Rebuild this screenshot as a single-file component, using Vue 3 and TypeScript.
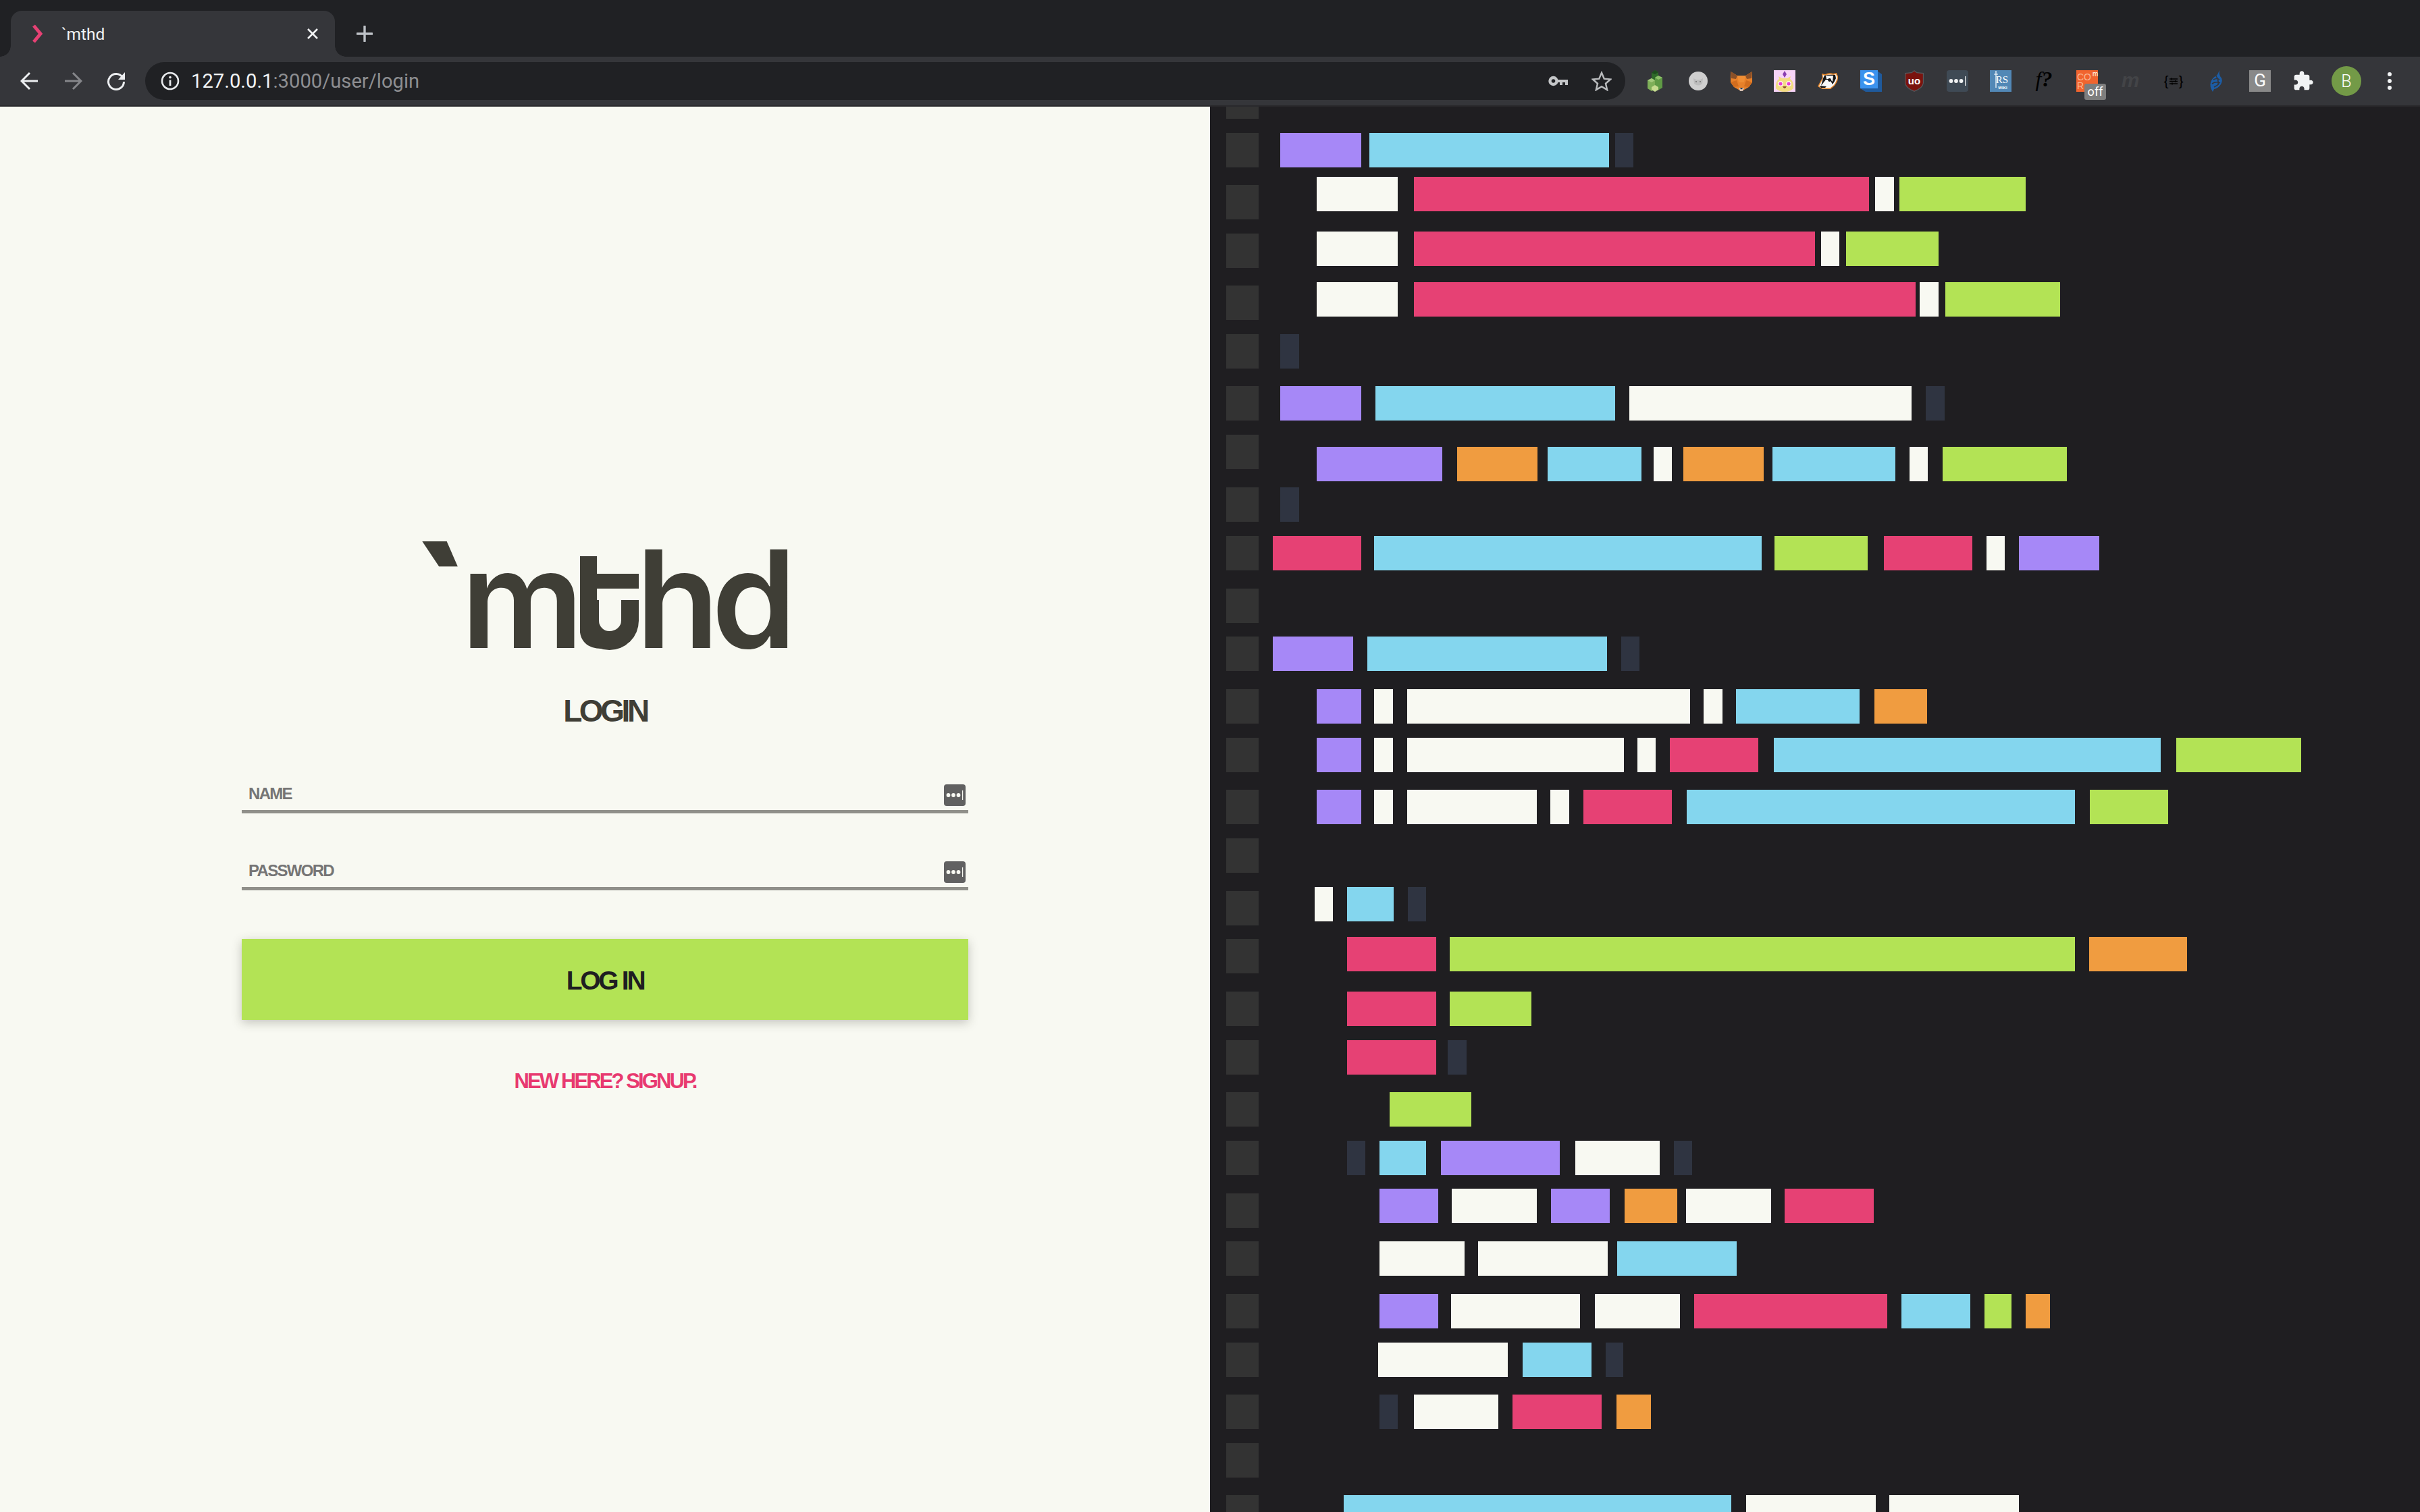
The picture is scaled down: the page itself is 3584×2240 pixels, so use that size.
<script setup lang="ts">
type Tone = 'pink' | 'cyan' | 'purple' | 'green' | 'orange' | 'white' | 'dark'
type Bar = [Tone, number, number]
interface SourceRow { g: number; b?: number; bars?: Bar[]; h?: number }

const BAR_ORIGIN = 1864

const source: SourceRow[] = [
  { g: 158, h: 18 },
  { g: 197, bars: [['purple', 1896, 2016], ['cyan', 2028, 2383], ['dark', 2392, 2419]] },
  { g: 274, b: 262, bars: [['white', 1950, 2070], ['pink', 2094, 2768], ['white', 2777, 2805], ['green', 2813, 3000]] },
  { g: 346, b: 343, bars: [['white', 1950, 2070], ['pink', 2094, 2688], ['white', 2697, 2724], ['green', 2734, 2871]] },
  { g: 423, b: 418, bars: [['white', 1950, 2070], ['pink', 2094, 2837], ['white', 2843, 2871], ['green', 2881, 3051]] },
  { g: 495, bars: [['dark', 1896, 1924]] },
  { g: 572, bars: [['purple', 1896, 2016], ['cyan', 2037, 2392], ['white', 2413, 2831], ['dark', 2852, 2880]] },
  { g: 644, b: 662, bars: [['purple', 1950, 2136], ['orange', 2158, 2277], ['cyan', 2292, 2431], ['white', 2449, 2476], ['orange', 2493, 2612], ['cyan', 2625, 2807], ['white', 2828, 2855], ['green', 2877, 3061]] },
  { g: 722, bars: [['dark', 1896, 1924]] },
  { g: 794, bars: [['pink', 1885, 2016], ['cyan', 2035, 2609], ['green', 2628, 2766], ['pink', 2790, 2921], ['white', 2942, 2969], ['purple', 2990, 3109]] },
  { g: 872 },
  { g: 943, bars: [['purple', 1885, 2004], ['cyan', 2025, 2380], ['dark', 2401, 2428]] },
  { g: 1021, bars: [['purple', 1950, 2016], ['white', 2035, 2063], ['white', 2084, 2503], ['white', 2523, 2551], ['cyan', 2571, 2754], ['orange', 2776, 2854]] },
  { g: 1093, bars: [['purple', 1950, 2016], ['white', 2035, 2063], ['white', 2084, 2405], ['white', 2425, 2452], ['pink', 2473, 2604], ['cyan', 2627, 3200], ['green', 3223, 3408]] },
  { g: 1170, bars: [['purple', 1950, 2016], ['white', 2035, 2063], ['white', 2084, 2276], ['white', 2296, 2324], ['pink', 2345, 2476], ['cyan', 2498, 3073], ['green', 3095, 3211]] },
  { g: 1242 },
  { g: 1320, b: 1314, bars: [['white', 1947, 1974], ['cyan', 1995, 2064], ['dark', 2085, 2112]] },
  { g: 1391, b: 1388, bars: [['pink', 1995, 2127], ['green', 2147, 3073], ['orange', 3094, 3239]] },
  { g: 1469, bars: [['pink', 1995, 2127], ['green', 2147, 2268]] },
  { g: 1541, bars: [['pink', 1995, 2127], ['dark', 2144, 2172]] },
  { g: 1618, bars: [['green', 2058, 2179]] },
  { g: 1690, bars: [['dark', 1995, 2022], ['cyan', 2043, 2112], ['purple', 2134, 2310], ['white', 2333, 2458], ['dark', 2479, 2506]] },
  { g: 1768, b: 1761, bars: [['purple', 2043, 2130], ['white', 2150, 2276], ['purple', 2297, 2384], ['orange', 2406, 2484], ['white', 2497, 2623], ['pink', 2643, 2775]] },
  { g: 1839, bars: [['white', 2043, 2169], ['white', 2189, 2381], ['cyan', 2395, 2572]] },
  { g: 1917, bars: [['purple', 2043, 2130], ['white', 2149, 2340], ['white', 2362, 2488], ['pink', 2509, 2795], ['cyan', 2816, 2918], ['green', 2939, 2979], ['orange', 3000, 3036]] },
  { g: 1989, bars: [['white', 2041, 2233], ['cyan', 2255, 2357], ['dark', 2378, 2404]] },
  { g: 2066, bars: [['dark', 2043, 2070], ['white', 2094, 2219], ['pink', 2240, 2372], ['orange', 2394, 2445]] },
  { g: 2138 },
  { g: 2215, bars: [['cyan', 1990, 2564], ['white', 2586, 2778], ['white', 2798, 2990]] },
]

const tops = source.map((r) => Math.min(r.g, r.b ?? r.g))
const rows = source.map((r, i) => {
  const top = tops[i]
  const next = i + 1 < tops.length ? tops[i + 1] : 2291
  let cursor = BAR_ORIGIN
  const bars = (r.bars ?? []).map(([tone, x0, x1]) => {
    const bar = { tone, width: x1 - x0, gap: x0 - cursor }
    cursor = x1
    return bar
  })
  return {
    height: next - top,
    gutterTop: r.g - top,
    gutterHeight: r.h ?? 51,
    barTop: (r.b ?? r.g) - top,
    bars,
  }
})
</script>

<template>
  <div class="window">
    <header class="tabstrip">
      <div class="tab">
        <svg class="favicon" viewBox="0 0 18 28"><path d="M3 2 L13 14 L3 26" fill="none" stroke="#e64174" stroke-width="5" /></svg>
        <span class="tab-title">`mthd</span>
        <svg class="tab-close" viewBox="0 0 20 20"><path d="M3 3 L17 17 M17 3 L3 17" stroke="#f1f3f4" stroke-width="2.6" /></svg>
      </div>
      <svg class="new-tab" viewBox="0 0 24 24"><path d="M12 1 V23 M1 12 H23" stroke="#bdc1c6" stroke-width="3.4" stroke-linecap="round" /></svg>
    </header>

    <nav class="toolbar">
      <div class="nav-buttons">
        <svg class="nav-icon" viewBox="0 0 28 28"><path d="M26 14 H3 M14 2 L2 14 L14 26" fill="none" stroke="#eceef0" stroke-width="3" /></svg>
        <svg class="nav-icon" viewBox="0 0 28 28"><path d="M2 14 H25 M14 2 L26 14 L14 26" fill="none" stroke="#85868a" stroke-width="3" /></svg>
        <svg class="nav-icon" viewBox="0 0 28 28">
          <path d="M23.5 8.5 A11.5 11.5 0 1 0 25.5 15" fill="none" stroke="#eceef0" stroke-width="3" />
          <path d="M17 12 H27 V1 Z" fill="#eceef0" />
        </svg>
      </div>

      <div class="omnibox">
        <svg class="info" viewBox="0 0 28 28">
          <circle cx="14" cy="14" r="12" fill="none" stroke="#e8eaed" stroke-width="2.6" />
          <path d="M14 12.5 V21" stroke="#e8eaed" stroke-width="2.8" />
          <circle cx="14" cy="8.6" r="1.8" fill="#e8eaed" />
        </svg>
        <span class="url"><span class="url-host">127.0.0.1</span>:3000/user/login</span>
        <span class="omni-spacer"></span>
        <svg class="key" viewBox="0 0 30 16">
          <circle cx="7.5" cy="8" r="5" fill="none" stroke="#c4c6c8" stroke-width="4.4" />
          <path d="M12 6 H29 V14 H25 V10 H21 V14 H17 V10 H12 Z" fill="#c4c6c8" />
        </svg>
        <svg class="star" viewBox="0 0 32 32"><path d="M16 3 L20 12.4 L30 13.3 L22.4 20 L24.7 30 L16 24.8 L7.3 30 L9.6 20 L2 13.3 L12 12.4 Z" fill="none" stroke="#b9bbbd" stroke-width="2.6" /></svg>
      </div>

      <div class="extensions">
        <svg class="ext" viewBox="0 0 32 32">
          <path d="M11 4 L16 0 L21 3 V18 L11 20 Z" fill="#2f6a2a" /><path d="M16 0 L21 3 L16 6 L11 4 Z" fill="#1d4c1e" />
          <path d="M16 11 L21 8 L27 11 V26 L20 30 L16 26 Z" fill="#5f9a45" /><path d="M21 8 L27 11 L21 14 L16 11 Z" fill="#8cc06a" />
          <path d="M5 15 L11 12 L16 15 V28 L11 31 L5 27 Z" fill="#7eaf58" /><path d="M11 12 L16 15 L11 18 L5 15 Z" fill="#a3ca7c" />
          <path d="M11 25 L16 22 L21 25 V29 L16 32 L11 29 Z" fill="#c7dc90" />
        </svg>
        <svg class="ext" viewBox="0 0 32 32">
          <circle cx="16" cy="16" r="14" fill="#cfcfcf" />
          <path d="M9 12 L10 20 Q16 25 22 20 L23 12 L19 14 H13 Z" fill="#bdbdbd" />
          <circle cx="13" cy="17" r=".9" fill="#666" /><circle cx="19" cy="17" r=".9" fill="#666" />
        </svg>
        <svg class="ext" viewBox="0 0 32 32">
          <path d="M0 2 L10 8 H22 L32 2 L32 18 L27 25 L20 29 L16 31 L12 29 L5 25 L0 18 Z" fill="#e8812a" />
          <path d="M0 2 L10 8 L8 13 L1 12 Z" fill="#8a5028" /><path d="M32 2 L22 8 L24 13 L31 12 Z" fill="#8a5028" />
          <path d="M10 8 H22 L20 18 H12 Z" fill="#f08e34" /><path d="M0 18 L9 15 L12 24 L5 25 Z" fill="#d26d1e" /><path d="M32 18 L23 15 L20 24 L27 25 Z" fill="#d26d1e" />
          <path d="M12 26 H20 L18 31 H14 Z" fill="#d7c1b3" /><path d="M13.5 26 H18.5 L16 28.5 Z" fill="#233447" />
        </svg>
        <svg class="ext" viewBox="0 0 32 32">
          <rect width="32" height="32" fill="#f7d4f7" />
          <path d="M16 1 L19 6 L16 11 L13 6 Z" fill="#8a3fb0" />
          <path d="M3 27 Q2 16 8 13 L7 9 L12 12 H20 L25 9 L24 13 Q30 16 29 27 Q24 32 16 32 Q8 32 3 27 Z" fill="#f3dc83" />
          <circle cx="10" cy="20" r="3.8" fill="#fff" /><circle cx="22" cy="20" r="3.8" fill="#fff" />
          <circle cx="10" cy="20" r="2.6" fill="#ea3fd0" /><circle cx="22" cy="20" r="2.6" fill="#ea3fd0" />
          <path d="M13 24 Q16 30 19 24 Z" fill="#8a4b2e" />
        </svg>
        <svg class="ext" viewBox="0 0 32 32">
          <path d="M1 24 L8 11 L7 5 L12 6 Q18 3 24 5 L29 4 L31 9 Q32 15 26 23 L20 28 L8 28 Z" fill="#e98a2e" />
          <path d="M3 23.5 L9 12 L8.5 7 L12 8 Q18 5 24 7 L28 6 L29.5 9.5 Q30 15 25 22 L19.5 26.5 L8 26.5 Z" fill="#f7f7f7" />
          <path d="M11 8 Q18 6 27 7 L28 12 Q26 17 23 21 L19 14 L13 14 L6 23 L9 12 Z" fill="#161616" />
          <path d="M13 8 L24 8 L23 17 L19 13 L14 13 Z" fill="#f7f7f7" />
          <circle cx="18.5" cy="14.5" r="2.4" fill="#161616" />
          <path d="M4 23 L14 24 L12 26 L6 26 Z" fill="#161616" />
        </svg>
        <svg class="ext" viewBox="0 0 32 32">
          <path d="M24 0 L32 6 V32 H8 L0 27 Z" fill="#1f5a9c" />
          <rect width="26" height="27" fill="#3b93ee" />
          <text x="13" y="22" class="ext-s">S</text>
        </svg>
        <svg class="ext" viewBox="0 0 32 32">
          <path d="M16 0 L20 3 L30 4 V19 Q29 27 16 32 Q3 27 2 19 V4 L12 3 Z" fill="#55585c" />
          <path d="M16 1.5 L19.6 4.2 L28.8 5.2 V19 Q28 26 16 30.6 Q4 26 3.2 19 V5.2 L12.4 4.2 Z" fill="#7a130e" />
          <text x="16" y="21" class="ext-ub">uo</text>
        </svg>
        <svg class="ext" viewBox="0 0 32 32">
          <rect width="32" height="32" rx="4" fill="#3f4a55" />
          <circle cx="6.5" cy="16" r="2.9" fill="#f1f3f4" /><circle cx="14" cy="16" r="2.9" fill="#f1f3f4" /><circle cx="21.5" cy="16" r="2.9" fill="#f1f3f4" />
          <rect x="27" y="9" width="1.2" height="14" fill="#f1f3f4" />
        </svg>
        <svg class="ext" viewBox="0 0 32 32">
          <rect width="32" height="32" fill="#5288b6" />
          <path d="M9 1 V26 M6 6 H12" stroke="#fff" stroke-width="1.2" />
          <text x="18" y="19" class="ext-rs">RS</text>
          <text x="19" y="28" class="ext-wiki">WIKI</text>
        </svg>
        <svg class="ext" viewBox="0 0 32 32"><text x="16" y="24" class="ext-f">f<tspan class="ext-q">?</tspan></text></svg>
        <svg class="ext ext-over" viewBox="0 0 44 44">
          <rect width="32" height="32" fill="#f1642e" />
          <text x="1" y="15" class="ext-cor">CO</text>
          <text x="1" y="28" class="ext-cor">R</text>
          <text x="24" y="9" class="ext-corm">m</text>
          <rect x="12" y="20" width="32" height="24" rx="3" fill="#7e7e7e" />
          <text x="28" y="38" class="ext-off">off</text>
        </svg>
        <svg class="ext" viewBox="0 0 32 32"><text x="16" y="25" class="ext-m">m</text></svg>
        <svg class="ext" viewBox="0 0 32 32">
          <text x="5" y="23" class="ext-brace">{</text><text x="27" y="23" class="ext-brace">}</text>
          <path d="M10 13 H22 M10 16.5 H22 M10 20 H22" stroke="#000" stroke-width="1.5" />
          <path d="M13 11.5 V14.5 M19 15 V18 M14 18.5 V21.5" stroke="#000" stroke-width="1.5" />
        </svg>
        <svg class="ext" viewBox="0 0 32 32">
          <path d="M20 0 Q19 5 21 9 Q26 14 22 21 Q18 27 12 28 L10 32 Q5 24 7 18 Q9 11 16 8 Q18 5 20 0 Z" fill="#1c5da6" />
          <path d="M11 14 Q17 11 20 14 M9 20 Q15 16 21 19 M12 25 Q17 23 19 20 M15 9 Q19 13 18 22" fill="none" stroke="#35363a" stroke-width="1.6" />
        </svg>
        <svg class="ext" viewBox="0 0 32 32">
          <rect width="32" height="32" fill="#898989" />
          <text x="16" y="24" class="ext-g">G</text>
        </svg>
        <svg class="ext" viewBox="0 0 24 24"><path d="M20.5 11H19V7c0-1.1-.9-2-2-2h-4V3.5C13 2.12 11.88 1 10.5 1S8 2.12 8 3.5V5H4c-1.1 0-1.99.9-1.99 2v3.8H3.5c1.49 0 2.7 1.21 2.7 2.7s-1.21 2.7-2.7 2.7H2V20c0 1.1.9 2 2 2h3.8v-1.5c0-1.49 1.21-2.7 2.7-2.7 1.49 0 2.7 1.21 2.7 2.7V22H17c1.1 0 2-.9 2-2v-4h1.5c1.38 0 2.5-1.12 2.5-2.5S21.88 11 20.5 11z" fill="#f1f3f4" /></svg>
      </div>

      <div class="avatar">B</div>
      <div class="kebab"><i></i><i></i><i></i></div>
    </nav>

    <main class="split">
      <section class="login">
        <div class="logo"><span class="logo-tick">`</span><span class="l-m">m</span><span class="l-t">t</span><span class="l-h">h</span><span class="l-d">d</span></div>
        <h1 class="title">LOGIN</h1>
        <label class="field">
          <span class="placeholder">NAME</span>
          <svg class="pw" viewBox="0 0 32 32">
            <rect width="32" height="32" rx="4" fill="#616161" />
            <circle cx="6.5" cy="16" r="2.9" fill="#f8f9f2" /><circle cx="14" cy="16" r="2.9" fill="#f8f9f2" /><circle cx="21.5" cy="16" r="2.9" fill="#f8f9f2" />
            <rect x="27" y="9" width="1.2" height="14" fill="#f8f9f2" />
          </svg>
        </label>
        <label class="field field-second">
          <span class="placeholder">PASSWORD</span>
          <svg class="pw" viewBox="0 0 32 32">
            <rect width="32" height="32" rx="4" fill="#616161" />
            <circle cx="6.5" cy="16" r="2.9" fill="#f8f9f2" /><circle cx="14" cy="16" r="2.9" fill="#f8f9f2" /><circle cx="21.5" cy="16" r="2.9" fill="#f8f9f2" />
            <rect x="27" y="9" width="1.2" height="14" fill="#f8f9f2" />
          </svg>
        </label>
        <button class="submit" type="button">LOG IN</button>
        <a class="signup">NEW HERE? SIGNUP.</a>
      </section>

      <section class="code">
        <div v-for="(row, i) in rows" :key="i" class="row" :style="{ height: row.height + 'px' }">
          <div class="gutter" :style="{ marginTop: row.gutterTop + 'px', height: row.gutterHeight + 'px' }"></div>
          <div class="bars" :style="{ marginTop: row.barTop + 'px' }">
            <div
              v-for="(bar, j) in row.bars"
              :key="j"
              class="bar"
              :class="bar.tone"
              :style="{ width: bar.width + 'px', marginLeft: bar.gap + 'px' }"
            ></div>
          </div>
        </div>
      </section>
    </main>
  </div>
</template>

<style>
html, body { margin: 0; background: #1f1e21; }
</style>

<style scoped>
.window { width: 3584px; height: 2240px; overflow: hidden; display: flex; flex-direction: column; font-family: "Liberation Sans", Arial, sans-serif; }

.tabstrip { height: 84px; background: #202124; display: flex; align-items: flex-end; padding-left: 16px; box-sizing: border-box; flex: none; }
.tab { position: relative; width: 480px; height: 68px; background: #35363a; border-radius: 16px 16px 0 0; display: flex; align-items: center; box-sizing: border-box; padding: 0 23px 0 31px; }
.tab::before, .tab::after { content: ""; position: absolute; bottom: 0; width: 16px; height: 16px; }
.tab::before { left: -16px; background: radial-gradient(circle at 0 0, transparent 15.5px, #35363a 16px); }
.tab::after { right: -16px; background: radial-gradient(circle at 100% 0, transparent 15.5px, #35363a 16px); }
.favicon { width: 18px; height: 28px; flex: none; }
.tab-title { margin-left: 26px; font: 400 24.5px Roboto, sans-serif; color: #f1f3f4; flex: 1; }
.tab-close { width: 20px; height: 20px; flex: none; }
.new-tab { width: 24px; height: 24px; margin: 0 0 22px 32px; flex: none; }

.toolbar { height: 74px; background: #35363a; border-bottom: 2px solid #29292c; display: flex; align-items: center; flex: none; box-sizing: border-box; padding-left: 30px; }
.nav-buttons { display: flex; gap: 36px; flex: none; }
.nav-icon { width: 28px; height: 28px; flex: none; }
.omnibox { margin-left: 29px; width: 2192px; height: 56px; border-radius: 28px; background: #202124; display: flex; align-items: center; padding: 0 20px 0 23px; box-sizing: border-box; flex: none; }
.info { width: 28px; height: 28px; flex: none; }
.url { margin-left: 17px; font: 400 29.2px Roboto, sans-serif; color: #8d8e91; }
.url-host { color: #f1f3f4; }
.omni-spacer { flex: 1; }
.key { width: 30px; height: 16px; flex: none; }
.star { width: 30px; height: 30px; margin-left: 34px; flex: none; }
.extensions { margin-left: 28px; display: flex; gap: 32px; flex: none; }
.ext { width: 32px; height: 32px; flex: none; overflow: visible; }
.ext-over { width: 44px; height: 44px; margin: 0 -12px -12px 0; }
.ext text { font-family: "Liberation Sans", sans-serif; }
.ext .ext-s { font: 700 27px "Liberation Sans", sans-serif; fill: #fff; text-anchor: middle; }
.ext .ext-ub { font: 700 15px "Liberation Sans", sans-serif; fill: #fff; text-anchor: middle; }
.ext .ext-rs { font: 400 15px "Liberation Serif", serif; fill: #fff; text-anchor: middle; }
.ext .ext-wiki { font: 700 6px "Liberation Sans", sans-serif; fill: #fff; text-anchor: middle; }
.ext .ext-f { font: italic 400 32px "Liberation Serif", serif; fill: #000; text-anchor: middle; }
.ext .ext-q { font-weight: 700; }
.ext .ext-cor { font: 400 14px "Liberation Sans", sans-serif; fill: #f9b896; }
.ext .ext-corm { font: 400 10px "Liberation Sans", sans-serif; fill: #fff; }
.ext .ext-off { font: 400 18px Roboto, sans-serif; fill: #fff; text-anchor: middle; }
.ext .ext-m { font: italic 700 30px "Liberation Sans", sans-serif; fill: #434447; text-anchor: middle; }
.ext .ext-brace { font: 400 20px "Liberation Sans", sans-serif; fill: #000; text-anchor: middle; }
.ext .ext-g { font: 400 26px Roboto, sans-serif; fill: #fff; text-anchor: middle; }
.avatar { margin-left: 26px; width: 44px; height: 44px; border-radius: 50%; background: #739a47; color: #fff; font: 300 25px Roboto, sans-serif; display: flex; align-items: center; justify-content: center; flex: none; }
.kebab { margin-left: 39px; display: flex; flex-direction: column; gap: 4px; flex: none; }
.kebab i { display: block; width: 6px; height: 6px; border-radius: 50%; background: #f1f3f4; }

.split { flex: 1; display: flex; min-height: 0; }
.login { width: 1792px; flex: none; background: #f8f9f2; display: flex; flex-direction: column; align-items: center; box-sizing: border-box; padding-top: 629px; color: #3f3e36; }

.logo { position: relative; display: flex; width: 470px; height: 200px; margin-left: 70px; font: 620 201px/200px Inter, sans-serif; color: #3f3e36; flex: none; }
.logo span { display: block; flex: none; }
.logo .logo-tick { position: absolute; left: -90px; top: 13px; font-size: 240px; font-weight: 800; letter-spacing: -40px; }
.l-m { width: 158px; margin-left: -13px; letter-spacing: -30px; }
.l-t { position: relative; width: 101px; clip-path: inset(0 -60px -20px 18px); letter-spacing: -30px; }
.l-t::before { content: ""; position: absolute; left: 40px; top: 63px; width: 65px; height: 22px; background: #3f3e36; }
.l-t::after { content: ""; position: absolute; left: 18px; top: 102px; width: 87px; height: 74px; box-sizing: border-box; border: solid #3f3e36; border-width: 0 26px 28px 28px; border-radius: 0 0 44px 44px; }
.l-h { width: 112px; letter-spacing: -30px; }

.title { margin: 40px 0 0; font: 700 46px/52px "Liberation Sans", sans-serif; letter-spacing: -4.4px; color: #3f3e36; }
.field { width: 1076px; height: 64px; margin-top: 62px; box-sizing: border-box; display: flex; align-items: center; justify-content: space-between; padding: 15px 4px 0 10px; border-bottom: 5px solid #90908a; flex: none; }
.field-second { margin-top: 50px; }
.placeholder { font: 700 24px "Liberation Sans", sans-serif; letter-spacing: -1.7px; color: #757575; margin-bottom: 4px; }
.pw { width: 32px; height: 32px; flex: none; }
.submit { width: 1076px; height: 120px; margin-top: 72px; border: 0; background: #b3e355; box-shadow: 0 4px 14px rgba(60, 60, 50, .28); font: 700 39px "Liberation Sans", sans-serif; letter-spacing: -3.3px; color: #1f1e21; flex: none; padding: 4px 0 0; }
.signup { margin-top: 73px; font: 700 31px "Liberation Sans", sans-serif; letter-spacing: -2.9px; color: #e83a70; }

.code { flex: 1; min-width: 0; background: #1f1e21; box-sizing: border-box; padding-left: 24px; overflow: hidden; }
.row { display: flex; align-items: flex-start; }
.gutter { width: 48px; background: #333333; flex: none; }
.bars { display: flex; }
.bar { height: 51px; flex: none; }
.pink { background: #e64174; }
.cyan { background: #84d6ee; }
.purple { background: #a688f7; }
.green { background: #b3e355; }
.orange { background: #f09c40; }
.white { background: #f8f9f2; }
.dark { background: #2f3441; }
</style>
